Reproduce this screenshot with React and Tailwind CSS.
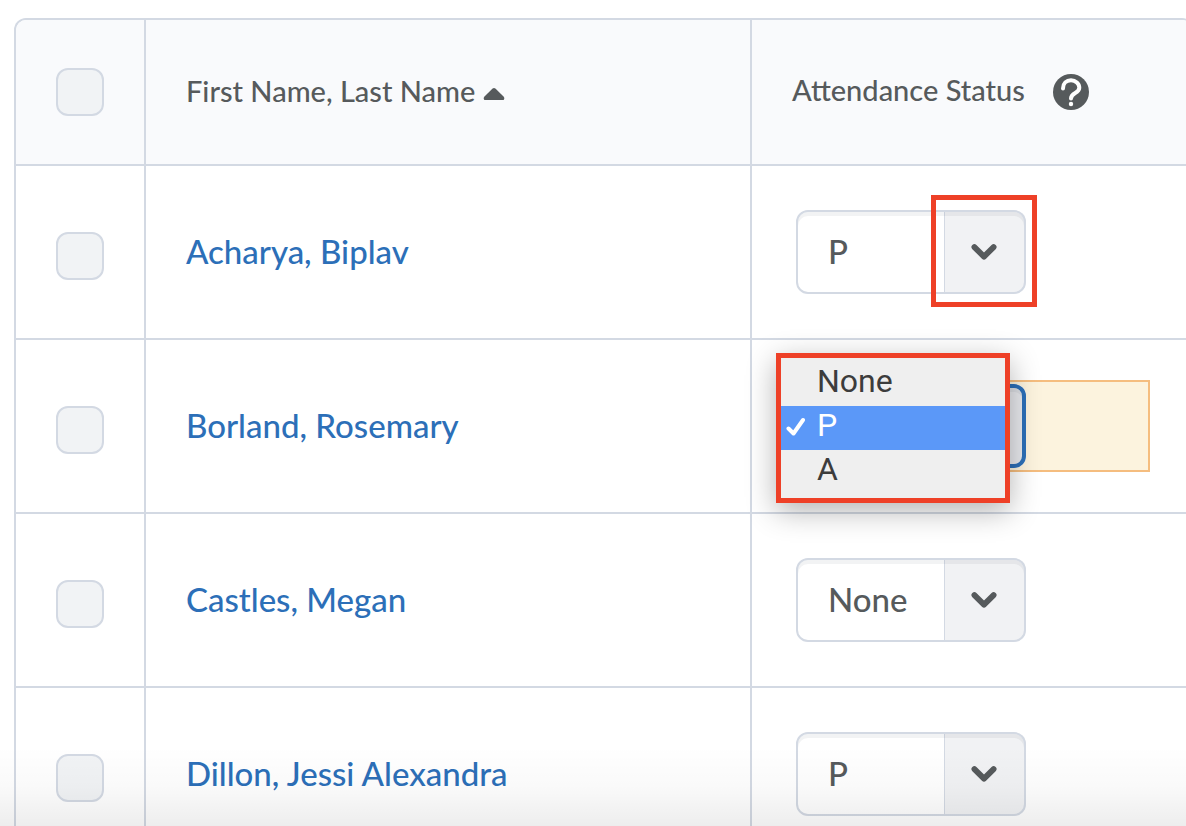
import React from "react";

const students = [
  { id: "acharya", name: "Acharya, Biplav", status: "P", marked: true },
  { id: "borland", name: "Borland, Rosemary", status: "P", open: true },
  { id: "castles", name: "Castles, Megan", status: "None" },
  { id: "dillon", name: "Dillon, Jessi Alexandra", status: "P" },
];

const options = ["None", "P", "A"];

function Checkbox({ label }) {
  return (
    <input
      type="checkbox"
      aria-label={label}
      className="block size-12 appearance-none rounded-xl border-2 border-[#d3d9e3] bg-[#f1f3f5] checked:bg-[#2c6fb8]"
    />
  );
}

function Chevron() {
  return (
    <svg viewBox="0 0 28 18" className="h-[18px] w-7" fill="none" aria-hidden="true">
      <path d="M4.400 4.100 14 13.600 23.600 4.100" stroke="#565a5c" strokeWidth="5.800" strokeLinecap="round" strokeLinejoin="round" />
    </svg>
  );
}

function StatusMenu({ value }) {
  return (
    <ul
      role="listbox"
      aria-label="Attendance options"
      className="absolute -left-5 -top-[31px] z-10 w-[234px] border-[5px] border-[#ee4027] bg-[#efefef] py-1 font-['Roboto','Liberation_Sans',sans-serif] text-[32px] font-normal text-[#3c3c3c] shadow-[0_8px_28px_rgba(0,0,0,0.3)]"
    >
      {options.map((option) => {
        const selected = option === value;
        return (
          <li
            key={option}
            role="option"
            aria-selected={selected}
            className={
              selected
                ? "flex h-11 items-center bg-[#5b98f8] pb-1.5 text-white"
                : "flex h-11 items-center pb-1.5"
            }
          >
            <span className="flex w-9 justify-center pr-1.5 pt-1">
              {selected && (
                <svg viewBox="0 0 20 20" className="size-5" fill="none" aria-hidden="true">
                  <path d="M2.500 11.500 7.500 16.500 17 3" stroke="currentColor" strokeWidth="4" strokeLinecap="round" strokeLinejoin="round" />
                </svg>
              )}
            </span>
            {option}
          </li>
        );
      })}
    </ul>
  );
}

function StatusSelect({ student }) {
  return (
    <div
      className={
        student.open
          ? "w-[358px] border-2 border-[#f5bd7f] bg-[#fcf3de] p-0.5"
          : "w-[358px] border-2 border-transparent p-0.5"
      }
    >
      <div className="relative grid w-[230px]">
        <span className="col-start-1 row-start-1 flex justify-end overflow-hidden rounded-xl bg-white">
          <span className="flex w-[82px] items-center justify-center border-l border-[#d3d9e3] bg-[#f1f2f4] pr-1">
            <Chevron />
          </span>
        </span>
        <select
          aria-label={`Attendance status for ${student.name}`}
          defaultValue={student.status}
          className={
            student.open
              ? "col-start-1 row-start-1 h-[84px] appearance-none rounded-xl border-4 border-[#2c6fb8] bg-transparent pl-7 text-[33px] font-medium text-[#565a5c] shadow-[inset_0_4px_0_rgba(70,80,100,0.07),inset_0_0_0_60px_rgba(70,80,110,0.05)]"
              : "col-start-1 row-start-1 h-[84px] appearance-none rounded-xl border-2 border-[#d3d9e3] bg-transparent pl-[30px] text-[33px] font-medium text-[#565a5c] shadow-[inset_0_4px_0_rgba(70,80,100,0.07)]"
          }
        >
          {options.map((option) => (
            <option key={option}>{option}</option>
          ))}
        </select>
        {student.marked && (
          <span className="pointer-events-none absolute -right-[11px] -top-[15px] h-28 w-[106px] border-[5px] border-[#ee4027]" />
        )}
        {student.open && <StatusMenu value={student.status} />}
      </div>
    </div>
  );
}

export default function App() {
  return (
    <main className="relative h-screen overflow-hidden bg-white pl-3.5 pt-[18px] font-['Lato',sans-serif] font-medium text-[#565a5c]">
      <table className="w-[calc(100%+8px)] table-fixed border-separate border-spacing-0 rounded-t-xl border-x-2 border-t-2 border-[#d3d9e3]">
        <colgroup>
          <col className="w-[130px]" />
          <col className="w-[606px]" />
          <col />
        </colgroup>
        <thead>
          <tr className="h-[146px] text-left text-[29px]">
            <th scope="col" className="rounded-tl-[10px] border-b-2 border-r-2 border-[#d3d9e3] bg-[#f9fafc] pl-10">
              <Checkbox label="Select all" />
            </th>
            <th scope="col" className="border-b-2 border-r-2 border-[#d3d9e3] bg-[#f9fafc] pl-10 font-medium">
              <button type="button" className="flex items-center gap-2">
                <span className="pb-0.5">First Name, Last Name</span>
                <svg viewBox="0 0 22 14" className="mt-1 h-3.5 w-[22px]" aria-hidden="true">
                  <path d="M9.600 1.600Q11 .5 12.400 1.600L20.500 9.500Q22 11 21 12.500L20.500 13H1.500L1 12.500Q0 11 1.500 9.500Z" fill="#565a5c" />
                </svg>
              </button>
            </th>
            <th scope="col" className="rounded-tr-[10px] border-b-2 border-[#d3d9e3] bg-[#f9fafc] pl-10 font-medium">
              <div className="flex items-center gap-7">
                <span className="pb-1">Attendance Status</span>
                <button type="button" aria-label="Help" className="size-9">
                  <svg viewBox="0 0 36 36" className="size-9" fill="none" aria-hidden="true">
                    <circle cx="18" cy="18" r="18" fill="#565a5c" />
                    <path d="M10 14.500C10 9.500 13.500 6.300 18 6.300S26.300 9.500 26.300 13.800C26.300 19.500 18 18.500 18 24.500" stroke="#fff" strokeWidth="4" strokeLinecap="round" />
                    <circle cx="18" cy="30" r="2.200" fill="#fff" />
                  </svg>
                </button>
              </div>
            </th>
          </tr>
        </thead>
        <tbody>
          {students.map((student) => (
            <tr key={student.id} className="h-[174px]">
              <td className="border-b-2 border-r-2 border-[#d3d9e3] pl-10 pt-2">
                <Checkbox label={`Select ${student.name}`} />
              </td>
              <td className="border-b-2 border-r-2 border-[#d3d9e3] pl-10 text-[33px] text-[#2c6fb8]">
                <a href={`#${student.id}`}>{student.name}</a>
              </td>
              <td className="border-b-2 border-[#d3d9e3] pl-10">
                <StatusSelect student={student} />
              </td>
            </tr>
          ))}
        </tbody>
      </table>
      <div className="pointer-events-none absolute inset-x-0 bottom-0 h-20 bg-linear-to-b from-transparent via-black/2 to-black/7" />
    </main>
  );
}
